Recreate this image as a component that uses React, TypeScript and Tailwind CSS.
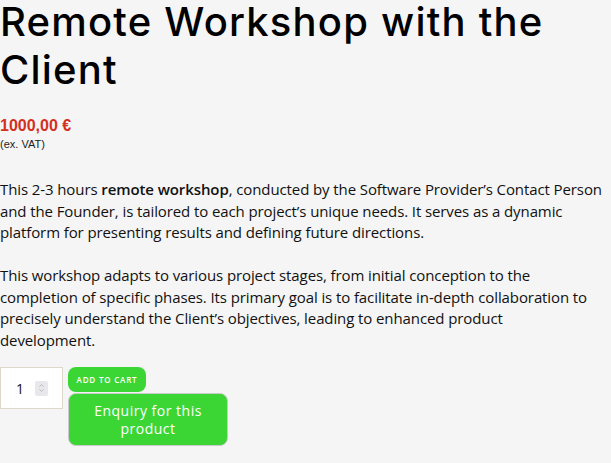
import { ChevronUp, ChevronDown } from "lucide-react";

export default function App() {
  return (
    <div className="min-h-[463px] w-full overflow-hidden bg-[#f5f5f5] text-black font-['Open_Sans',sans-serif]">
      <h1 className="font-['Inter',sans-serif] text-[40px] font-medium tracking-[1.2px] text-black">
        <span className="block leading-[43px]">Remote Workshop with the</span>
        <span className="block leading-[53px]">Client</span>
      </h1>

      <div className="mt-[21px] font-['Liberation_Sans',Arial,sans-serif]">
        <p className="text-[16px] leading-[18px] font-bold text-[#d3301f]">1000,00 €</p>
        <p className="mt-[3px] text-[11px] leading-[13px] text-[#222]">(ex. VAT)</p>
      </div>

      <div className="mt-[28px] text-[15px] leading-[21.5px] tracking-[-0.1px] text-[#111]">
        <p className="whitespace-nowrap">
          This 2-3 hours <strong className="font-semibold">remote workshop</strong>, conducted by
          the Software Provider’s Contact Person
          <br />
          and the Founder, is tailored to each project’s unique needs. It serves as a dynamic
          <br />
          platform for presenting results and defining future directions.
        </p>
        <p className="mt-[21.5px] whitespace-nowrap">
          This workshop adapts to various project stages, from initial conception to the
          <br />
          completion of specific phases. Its primary goal is to facilitate in-depth collaboration to
          <br />
          precisely understand the Client’s objectives, leading to enhanced product
          <br />
          development.
        </p>
      </div>

      <div className="mt-[16px] flex items-start gap-[5px]">
        <div className="flex h-[42px] w-[63px] items-center border border-[#ddd8cc] bg-white pl-[15px]">
          <span className="w-[19px] text-[14px] text-[#111]">1</span>
          <span className="flex h-[15px] w-[13px] flex-col items-center justify-center rounded-[2px] bg-[#e8e8ec] text-[#999]">
            <ChevronUp size={7} strokeWidth={2} className="-mb-[1px]" />
            <ChevronDown size={7} strokeWidth={2} className="-mt-[1px]" />
          </span>
        </div>
        <div className="flex flex-col gap-[1px]">
          <button className="h-[25px] w-[78px] rounded-[8px] bg-[#3bd634] text-[8px] font-semibold tracking-[0.8px] text-white">
            ADD TO CART
          </button>
          <button className="h-[53px] w-[160px] rounded-[8px] border border-[#c9c9c9] bg-[#3bd634] text-[14px] leading-[18px] font-medium tracking-[0.5px] text-white">
            Enquiry for this
            <br />
            product
          </button>
        </div>
      </div>
    </div>
  );
}
